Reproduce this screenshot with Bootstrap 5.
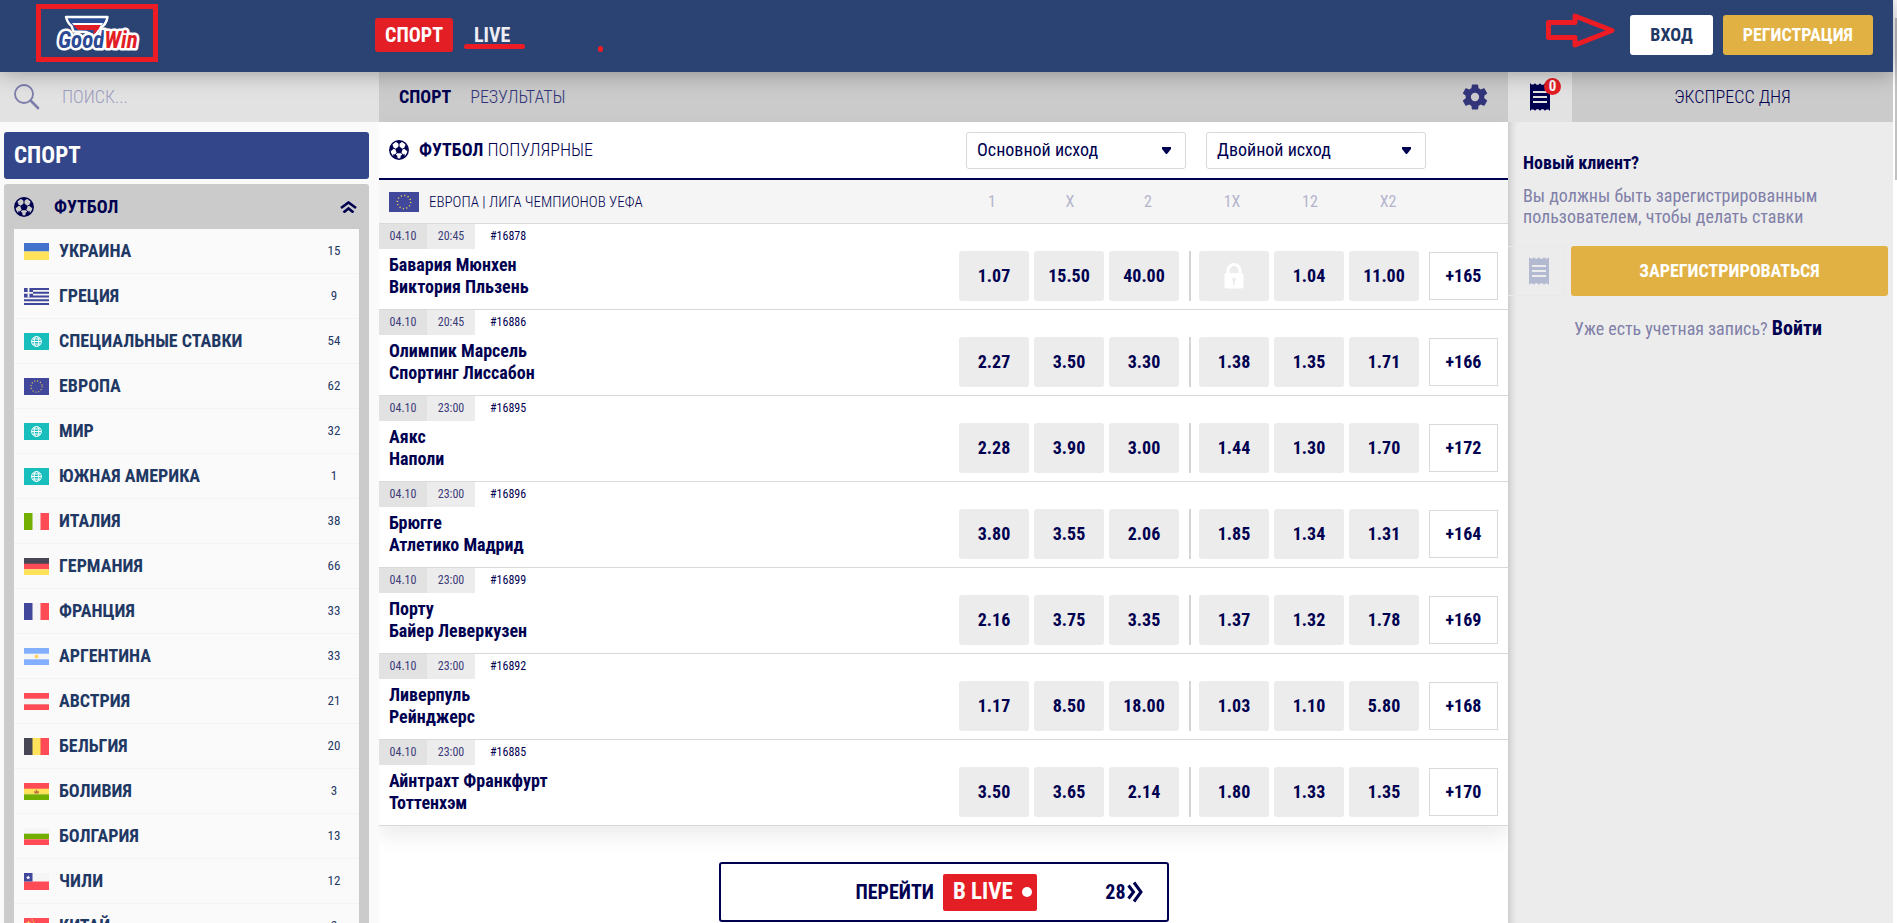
<!DOCTYPE html>
<html lang="ru">
<head>
<meta charset="utf-8">
<meta name="viewport" content="width=device-width, initial-scale=1">
<title>GoodWin</title>
<link href="https://cdn.jsdelivr.net/npm/bootstrap@5.3.0/dist/css/bootstrap.min.css" rel="stylesheet">
<style>
  :root { --ink: #000050; --navy: #1f3864; --head: #2b4373; --red: #e41e25; --pen: #ed1c24; --gold: #e1b243; --bar: #cbcbcb; --tile: #ececec; --line: #d9d9d9; }
  body { font-family: "Roboto Condensed", Roboto, sans-serif; font-size: 18px; line-height: 22px; color: var(--ink); background: #fff; }
  a { color: inherit; text-decoration: none; }
  .light-text { font-weight: 300; }
  .soft-ink { color: #33357b; }
  .page { padding-right: 4px; }
  .top-head { height: 72px; background: var(--head); box-shadow: 0 0 22px rgba(0,0,0,.35); z-index: 5; }
  .brand-area { width: 375px; padding-left: 36px; }
  .brand { border: 5px solid var(--pen); width: 122px; height: 58px; }
  .modes { gap: 11px; padding-bottom: 2px; }
  .mode { height: 34px; padding: 0 10px; font-size: 20px; font-weight: 700; color: #ededf2; border-radius: 3px; }
  .mode-on { background: var(--red); color: #fff; }
  .underline-mark { left: 0; right: -5px; bottom: 3px; height: 5px; border-radius: 3px; background: var(--pen); }
  .dot-mark { width: 5px; height: 6px; border-radius: 3px; background: var(--pen); margin-left: 67px; align-self: flex-end; }
  .head-actions { padding: 0 20px 2px 0; gap: 10px; }
  .head-btn { height: 40px; padding: 0 20px; border: 0; border-radius: 3px; font-size: 18px; font-weight: 700; line-height: 22px; }
  .btn-enter, .btn-enter:hover { background: #fff; color: var(--navy); }
  .btn-gold, .btn-gold:hover { background: var(--gold); color: #fff; }
  .scroll-thumb { right: 0; top: 18px; width: 2px; height: 162px; background: #c1c1c1; }

  .side { width: 379px; background: #fafafa; }
  .search { height: 50px; background: #e2e2e2; padding-left: 14px; gap: 22px; }
  .search input { font-weight: 300; font-size: 18px; color: var(--ink); }
  .search input::placeholder { color: #9c9cc0; opacity: 1; }
  .side-body { padding: 10px 10px 0 4px; gap: 5px; }
  .side-title { height: 47px; padding-left: 10px; background: #33468a; color: #fff; border-radius: 3px; font-size: 23px; font-weight: 700; }
  .sport-box { background: var(--bar); border-radius: 3px; padding: 0 10px; }
  .sport-head { height: 45px; font-weight: 700; padding-right: 2px; }
  .land { height: 45px; padding: 0 14px 0 10px; background: #fafafa; border-bottom: 1px solid #f3f3f5; color: var(--navy); font-weight: 700; }
  .land svg { width: 25px; height: 17px; margin-right: 10px; }
  .land .num { width: 22px; font-size: 13px; font-weight: 400; text-align: center; }

  .sub-bar { height: 50px; background: var(--bar); }
  .main-tabs { padding: 0 20px; gap: 19px; }
  .title-row { height: 58px; padding: 0 10px; border-bottom: 2px solid var(--ink); }
  .title-row > svg, .league > svg { margin-right: 10px; }
  .market { width: 220px; height: 37px; padding: 0 10px; border: 1px solid var(--line); border-radius: 3px; font-size: 18px; font-weight: 400; line-height: 22px; color: var(--ink); margin-right: 20px;
    background: #fff url("data:image/svg+xml,%3Csvg xmlns='http://www.w3.org/2000/svg' viewBox='0 0 9 7'%3E%3Cpath fill='%23000050' d='M0 0h9v2L5 7H4L0 2z'/%3E%3C/svg%3E") no-repeat right 14px center / 9px 7px; }
  .market:last-of-type { margin-right: 72px; }
  .league { height: 44px; padding: 0 10px; background: #f5f5f5; border-bottom: 1px solid var(--line); font-size: 15px; }
  .league .cap-col { width: 78px; text-align: center; color: #b4b4cd; font-size: 16px; font-weight: 400; }
  .league .cap-gap { width: 6px; }
  .league .cap-end { width: 71px; }
  .match { height: 86px; border-bottom: 1px solid var(--line); }
  .chip { width: 48px; height: 25px; font-size: 12px; line-height: 25px; text-align: center; color: #3c3c78; background: var(--tile); }
  .chip-day { background: #e2e2e2; }
  .code { font-size: 12px; line-height: 25px; padding-left: 15px; }
  .teams { padding: 5px 10px 0; font-weight: 700; }
  .odds { padding: 27px 10px 0 0; gap: 5px; }
  .odd { width: 70px; height: 50px; padding: 0; border: 0; border-radius: 3px; background: var(--tile); color: var(--ink); font-weight: 700; }
  .split { width: 2px; height: 50px; margin: 0 3px 0 5px; background: #d4d4d4; }
  .more { width: 69px; height: 48px; padding: 0; margin: 1px 0 0 5px; border: 1px solid var(--line); background: #fff; color: var(--ink); font-weight: 700; }
  .match-list { box-shadow: 0 10px 20px rgba(0,0,0,.08); }
  .to-live { width: 450px; height: 60px; margin-top: 36px; border: 2px solid var(--ink); border-radius: 3px; color: var(--ink); font-size: 20px; font-weight: 700; background: #fff; padding: 0 24px 0 135px; }
  .live-chip { height: 37px; background: var(--red); color: #fff; border-radius: 2px; padding: 0 5px 0 10px; font-size: 23px; gap: 9px; margin-left: 9px; }
  .live-dot { width: 10px; height: 10px; border-radius: 50%; background: #fff; }

  .slip { width: 385px; background: #ececec; }
  .slip-tab { width: 64px; background: #e2e2e2; }
  .slip-count { left: 36px; top: 6px; width: 17px; height: 17px; border-radius: 50%; background: var(--red); color: #fff; font-size: 15px; line-height: 17px; font-weight: 700; text-align: center; }
  .slip-body { padding: 30px 5px 0 0; box-shadow: inset 10px 0 9px -8px rgba(0,0,0,.18); }
  .muted-ink { color: #8080a8; }
  .slip-text { padding-left: 15px; line-height: 21px; }
  .slip-action { margin-top: 19px; gap: 6px; }
  .ghost-slip { width: 57px; height: 50px; padding-left: 6px; border: 1px solid #e8e8ea; border-left: 0; color: #b2b9d0; }
  .wide-btn { height: 50px; border: 0; border-radius: 3px; font-weight: 700; }
  .login-line { padding-top: 21px; }
  .login-line a { color: var(--ink); font-size: 20px; font-weight: 700; }
</style>
</head>
<body>
<svg width="0" height="0" class="d-none" aria-hidden="true">
  <symbol id="ball" viewBox="0 0 20 20"><circle cx="10" cy="10" r="9.200" fill="none" stroke="#000050" stroke-width="1.500"/><path fill="#000050" d="M10 6.200l3.700 2.700-1.400 4.300H7.700L6.300 8.900zM6.300 1.500Q10 0 13.700 1.500L10 4zM.8 7L3.800 5l1 3.800L1.400 11.500zM19.200 7L16.200 5l-1 3.800 3.400 2.700zM4 17.500l.4-3.600 3.800 1.500L8.800 19zM16 17.500l-.4-3.600-3.800 1.500-.6 3.600z"/><path stroke="#000050" stroke-width="1" d="M10 3v4M6.500 9L4 8M13.500 9l2.500-1M7.700 13l-1.700 2M12.300 13l1.700 2"/></symbol>
  <symbol id="ticket" viewBox="0 0 20 28"><path fill="currentColor" fill-rule="evenodd" d="M0 0l1.500 1.500h2L5 .2l1.500 1.500h2L10 .2l1.500 1.500h2L15 .2l1.500 1.300h2L20 0v28l-1.500-1.500-2 0L15 27.800l-1.500-1.500h-2L10 27.800l-1.500-1.500h-2L5 27.800l-1.500-1.300h-2L0 28zM3 8v2h14V8zM3 13v2h14v-2zM3 18v2h14v-2z"/></symbol>
  <symbol id="eu" viewBox="0 0 25 17" preserveAspectRatio="none"><path fill="#41479b" d="M0 0h25v17H0z"/><circle cx="12.500" cy="8.500" r="5.600" fill="none" stroke="#e8cf58" stroke-width="1.200" stroke-dasharray="1 1.930"/></symbol>
  <symbol id="world" viewBox="0 0 25 17"><path fill="#17bebb" d="M0 0h25v17H0z"/><g fill="none" stroke="#fff" stroke-width="1"><circle cx="12.500" cy="8.500" r="4.900"/><ellipse cx="12.500" cy="8.500" rx="2.300" ry="4.900"/><path d="M7.500 8.500h10M8.500 6h8M8.500 11h8"/></g></symbol>
</svg>

<div class="page vh-100 d-flex flex-column overflow-hidden position-relative">
  <header class="top-head d-flex align-items-center position-relative flex-shrink-0">
    <div class="brand-area flex-shrink-0 align-self-start pt-1">
      <a href="#" class="brand d-flex align-items-center justify-content-center" aria-label="GoodWin">
        <svg width="100" height="40" viewBox="0 0 100 40">
          <path d="M19 4h41.500q-1 8-8 11l-4 8-9-4-13-.5-2-5.500q-4-3-5.500-9z" fill="#2c4a94" stroke="#fff" stroke-width="2.400" stroke-linejoin="round"/>
          <path d="M25 10h31l-1.500 2.500H27z" fill="#fff"/>
          <path d="M26.500 12h27q-1 4-4.500 7l-3 4 1-6H31.500q-3-2-5-5z" fill="#e41e25"/>
          <g font-family="Roboto Condensed, sans-serif" font-size="23" font-style="italic" font-weight="700" stroke="#fff" stroke-width="5" stroke-linejoin="round" paint-order="stroke">
            <text x="11" y="35" fill="#2c4a94">Good<tspan fill="#e41e25">Win</tspan></text>
          </g>
        </svg>
      </a>
    </div>
    <nav class="modes d-flex align-items-center">
      <a href="#" class="mode mode-on d-flex align-items-center">СПОРТ</a>
      <a href="#" class="mode d-flex align-items-center position-relative">LIVE<span class="underline-mark position-absolute"></span></a>
      <span class="dot-mark"></span>
    </nav>
    <div class="head-actions ms-auto d-flex align-items-center">
      <svg width="84" height="48" viewBox="0 0 84 48" fill="none" stroke="#ed1c24" stroke-width="5" stroke-linejoin="round"><path d="M12.500 11.500H39V5l37 14.500L39 34v-7.500H12.500z"/></svg>
      <button type="button" class="btn head-btn btn-enter">ВХОД</button>
      <button type="button" class="btn head-btn btn-gold">РЕГИСТРАЦИЯ</button>
    </div>
  </header>

  <div class="d-flex flex-grow-1 overflow-hidden">
    <aside class="side flex-shrink-0 d-flex flex-column overflow-hidden">
      <label class="search d-flex align-items-center flex-shrink-0">
        <svg width="26" height="26" viewBox="0 0 26 26" fill="none" stroke="#7d7dab" stroke-linecap="round"><circle cx="10" cy="10" r="9" stroke-width="1.800"/><path d="M16.500 16.500L24 24" stroke-width="2.600"/></svg>
        <input type="text" class="border-0 bg-transparent p-0 flex-grow-1 shadow-none" placeholder="ПОИСК..." aria-label="Поиск">
      </label>
      <div class="side-body d-flex flex-column">
        <div class="side-title d-flex align-items-center">СПОРТ</div>
        <div class="sport-box">
          <a href="#" class="sport-head d-flex align-items-center">
            <svg width="20" height="20"><use href="#ball"/></svg><span class="flex-grow-1 ps-3 ms-1">ФУТБОЛ</span>
            <svg width="17" height="12" viewBox="0 0 17 12" fill="none" stroke="#000050" stroke-width="2.600"><path d="M1 7l7.500-5.500L16 7M3.500 11.500l5-4 5 4"/></svg>
          </a>
          <a href="#" class="land d-flex align-items-center"><svg viewBox="0 0 25 17"><path fill="#4173cd" d="M0 0h25v8.500H0z"/><path fill="#ffe15a" d="M0 8.500h25V17H0z"/></svg><span class="flex-grow-1">УКРАИНА</span><span class="num">15</span></a>
          <a href="#" class="land d-flex align-items-center"><svg viewBox="0 0 25 17"><path fill="#f5f5f5" d="M0 0h25v17H0z"/><path fill="#41479b" d="M0 0h25v2H0zM0 3.800h25v1.900H0zM0 7.600h25v1.900H0zM0 11.300h25v1.900H0zM0 15h25v2H0zM0 0h9v9.500H0z"/><path fill="#f5f5f5" d="M3.600 0h1.800v9.500H3.600zM0 3.900h9v1.800H0z"/></svg><span class="flex-grow-1">ГРЕЦИЯ</span><span class="num">9</span></a>
          <a href="#" class="land d-flex align-items-center"><svg><use href="#world"/></svg><span class="flex-grow-1">СПЕЦИАЛЬНЫЕ СТАВКИ</span><span class="num">54</span></a>
          <a href="#" class="land d-flex align-items-center"><svg><use href="#eu"/></svg><span class="flex-grow-1">ЕВРОПА</span><span class="num">62</span></a>
          <a href="#" class="land d-flex align-items-center"><svg><use href="#world"/></svg><span class="flex-grow-1">МИР</span><span class="num">32</span></a>
          <a href="#" class="land d-flex align-items-center"><svg><use href="#world"/></svg><span class="flex-grow-1">ЮЖНАЯ АМЕРИКА</span><span class="num">1</span></a>
          <a href="#" class="land d-flex align-items-center"><svg viewBox="0 0 25 17"><path fill="#f5f5f5" d="M0 0h25v17H0z"/><path fill="#73af00" d="M0 0h8.500v17H0z"/><path fill="#ff4b55" d="M16.500 0H25v17h-8.500z"/></svg><span class="flex-grow-1">ИТАЛИЯ</span><span class="num">38</span></a>
          <a href="#" class="land d-flex align-items-center"><svg viewBox="0 0 25 17"><path fill="#464655" d="M0 0h25v6H0z"/><path fill="#ff4b55" d="M0 5.700h25v5.600H0z"/><path fill="#ffe15a" d="M0 11.300h25V17H0z"/></svg><span class="flex-grow-1">ГЕРМАНИЯ</span><span class="num">66</span></a>
          <a href="#" class="land d-flex align-items-center"><svg viewBox="0 0 25 17"><path fill="#f5f5f5" d="M0 0h25v17H0z"/><path fill="#41479b" d="M0 0h8.500v17H0z"/><path fill="#ff4b55" d="M16.500 0H25v17h-8.500z"/></svg><span class="flex-grow-1">ФРАНЦИЯ</span><span class="num">33</span></a>
          <a href="#" class="land d-flex align-items-center"><svg viewBox="0 0 25 17"><path fill="#82afff" d="M0 0h25v17H0z"/><path fill="#f5f5f5" d="M0 5.700h25v5.600H0z"/><circle cx="12.500" cy="8.500" r="1.900" fill="#ffd166"/></svg><span class="flex-grow-1">АРГЕНТИНА</span><span class="num">33</span></a>
          <a href="#" class="land d-flex align-items-center"><svg viewBox="0 0 25 17"><path fill="#ff4b55" d="M0 0h25v17H0z"/><path fill="#f5f5f5" d="M0 5.700h25v5.600H0z"/></svg><span class="flex-grow-1">АВСТРИЯ</span><span class="num">21</span></a>
          <a href="#" class="land d-flex align-items-center"><svg viewBox="0 0 25 17"><path fill="#ffe15a" d="M0 0h25v17H0z"/><path fill="#464655" d="M0 0h8.500v17H0z"/><path fill="#ff4b55" d="M16.500 0H25v17h-8.500z"/></svg><span class="flex-grow-1">БЕЛЬГИЯ</span><span class="num">20</span></a>
          <a href="#" class="land d-flex align-items-center"><svg viewBox="0 0 25 17"><path fill="#ff4b55" d="M0 0h25v6H0z"/><path fill="#ffe15a" d="M0 5.700h25v5.600H0z"/><path fill="#73af00" d="M0 11.300h25V17H0z"/><path fill="#c0703c" d="M10.500 10.500L10 8l1.500.5 1-2.500 1 2.500L15 8l-.5 2.500z"/></svg><span class="flex-grow-1">БОЛИВИЯ</span><span class="num">3</span></a>
          <a href="#" class="land d-flex align-items-center"><svg viewBox="0 0 25 17"><path fill="#f5f5f5" d="M0 0h25v6H0z"/><path fill="#73af00" d="M0 5.700h25v5.600H0z"/><path fill="#ff4b55" d="M0 11.300h25V17H0z"/></svg><span class="flex-grow-1">БОЛГАРИЯ</span><span class="num">13</span></a>
          <a href="#" class="land d-flex align-items-center"><svg viewBox="0 0 25 17"><path fill="#f5f5f5" d="M0 0h25v9H0z"/><path fill="#ff4b55" d="M0 8.500h25V17H0z"/><path fill="#41479b" d="M0 0h8.500v8.500H0z"/><path fill="#fff" d="M4.200 2.300l.6 1.500 1.600.1-1.200 1 .4 1.600-1.400-.9-1.400.9.400-1.600-1.200-1 1.600-.1z"/></svg><span class="flex-grow-1">ЧИЛИ</span><span class="num">12</span></a>
          <a href="#" class="land d-flex align-items-center"><svg viewBox="0 0 25 17"><path fill="#ff4b55" d="M0 0h25v17H0z"/><path fill="#ffe15a" d="M4.500 2.500l.8 2 2.100.1-1.600 1.300.5 2.100-1.800-1.100L2.700 8l.5-2.100-1.600-1.300 2.100-.1zM7.500 1.500h1.400v1H7.500zM9 3.500h1.300v1H9zM9 6h1.300v1H9z"/></svg><span class="flex-grow-1">КИТАЙ</span><span class="num">2</span></a>
        </div>
      </div>
    </aside>

    <main class="flex-grow-1 overflow-hidden">
      <div class="sub-bar main-tabs d-flex align-items-center">
        <a href="#" class="fw-bold">СПОРТ</a>
        <a href="#" class="light-text soft-ink">РЕЗУЛЬТАТЫ</a>
        <button type="button" class="btn border-0 p-0 ms-auto d-flex" aria-label="Настройки">
          <svg width="26" height="26" viewBox="2 2 20 20" fill="#33357b"><path d="M19.140 12.940c.04-.3.060-.61.060-.94 0-.32-.02-.64-.07-.94l2.030-1.580a.49.490 0 0 0 .12-.61l-1.920-3.320a.488.488 0 0 0-.59-.22l-2.390.96c-.5-.38-1.030-.7-1.620-.94l-.36-2.540a.484.484 0 0 0-.48-.41h-3.840c-.24 0-.43.170-.47.410l-.36 2.540c-.59.240-1.130.570-1.620.94l-2.390-.96c-.22-.08-.47 0-.59.220L2.740 8.870c-.12.210-.08.470.120.610l2.030 1.580c-.05.300-.09.630-.09.940s.02.640.070.940l-2.030 1.580a.49.490 0 0 0-.12.610l1.920 3.320c.12.220.37.290.59.220l2.390-.96c.5.380 1.030.700 1.620.940l.36 2.540c.05.240.24.410.48.410h3.840c.24 0 .44-.17.470-.41l.36-2.540c.59-.24 1.130-.56 1.620-.94l2.390.96c.22.080.47 0 .59-.22l1.920-3.320c.12-.22.070-.47-.12-.61zM12 15.200a3.200 3.200 0 1 1 0-6.400 3.200 3.200 0 0 1 0 6.400z"/></svg>
        </button>
      </div>
      <section class="match-list">
        <div class="title-row d-flex align-items-center">
          <svg width="20" height="20"><use href="#ball"/></svg>
          <div class="flex-grow-1"><b>ФУТБОЛ</b> <span class="light-text">ПОПУЛЯРНЫЕ</span></div>
          <select class="market form-select flex-shrink-0" aria-label="Рынок 1"><option>Основной исход</option></select>
          <select class="market form-select flex-shrink-0" aria-label="Рынок 2"><option>Двойной исход</option></select>
        </div>
        <div class="league d-flex align-items-center light-text">
          <svg width="30" height="20"><use href="#eu"/></svg>
          <span class="flex-grow-1">ЕВРОПА | ЛИГА ЧЕМПИОНОВ УЕФА</span>
          <span class="cap-col">1</span><span class="cap-col">X</span><span class="cap-col">2</span><span class="cap-gap"></span><span class="cap-col">1X</span><span class="cap-col">12</span><span class="cap-col">X2</span><span class="cap-end"></span>
        </div>

        <div class="match d-flex">
          <div class="flex-grow-1"><div class="d-flex"><span class="chip chip-day">04.10</span><span class="chip">20:45</span><span class="code">#16878</span></div><div class="teams">Бавария Мюнхен<br>Виктория Пльзень</div></div>
          <div class="odds d-flex"><button class="odd">1.07</button><button class="odd">15.50</button><button class="odd">40.00</button><span class="split"></span><button class="odd" disabled aria-label="Закрыто"><svg width="20" height="26" viewBox="0 0 20 26"><path d="M4 11V7.500a6 6 0 0 1 12 0V11" fill="none" stroke="#fff" stroke-width="3"/><path fill="#fff" fill-rule="evenodd" d="M2.500 10h15q2 0 2 2v11.500q0 2-2 2h-15q-2 0-2-2V12q0-2 2-2zM10 14.500a1.900 1.900 0 0 0-1 3.500v3.500h2V18a1.900 1.900 0 0 0-1-3.500z"/></svg></button><button class="odd">1.04</button><button class="odd">11.00</button><button class="more">+165</button></div>
        </div>
        <div class="match d-flex">
          <div class="flex-grow-1"><div class="d-flex"><span class="chip chip-day">04.10</span><span class="chip">20:45</span><span class="code">#16886</span></div><div class="teams">Олимпик Марсель<br>Спортинг Лиссабон</div></div>
          <div class="odds d-flex"><button class="odd">2.27</button><button class="odd">3.50</button><button class="odd">3.30</button><span class="split"></span><button class="odd">1.38</button><button class="odd">1.35</button><button class="odd">1.71</button><button class="more">+166</button></div>
        </div>
        <div class="match d-flex">
          <div class="flex-grow-1"><div class="d-flex"><span class="chip chip-day">04.10</span><span class="chip">23:00</span><span class="code">#16895</span></div><div class="teams">Аякс<br>Наполи</div></div>
          <div class="odds d-flex"><button class="odd">2.28</button><button class="odd">3.90</button><button class="odd">3.00</button><span class="split"></span><button class="odd">1.44</button><button class="odd">1.30</button><button class="odd">1.70</button><button class="more">+172</button></div>
        </div>
        <div class="match d-flex">
          <div class="flex-grow-1"><div class="d-flex"><span class="chip chip-day">04.10</span><span class="chip">23:00</span><span class="code">#16896</span></div><div class="teams">Брюгге<br>Атлетико Мадрид</div></div>
          <div class="odds d-flex"><button class="odd">3.80</button><button class="odd">3.55</button><button class="odd">2.06</button><span class="split"></span><button class="odd">1.85</button><button class="odd">1.34</button><button class="odd">1.31</button><button class="more">+164</button></div>
        </div>
        <div class="match d-flex">
          <div class="flex-grow-1"><div class="d-flex"><span class="chip chip-day">04.10</span><span class="chip">23:00</span><span class="code">#16899</span></div><div class="teams">Порту<br>Байер Леверкузен</div></div>
          <div class="odds d-flex"><button class="odd">2.16</button><button class="odd">3.75</button><button class="odd">3.35</button><span class="split"></span><button class="odd">1.37</button><button class="odd">1.32</button><button class="odd">1.78</button><button class="more">+169</button></div>
        </div>
        <div class="match d-flex">
          <div class="flex-grow-1"><div class="d-flex"><span class="chip chip-day">04.10</span><span class="chip">23:00</span><span class="code">#16892</span></div><div class="teams">Ливерпуль<br>Рейнджерс</div></div>
          <div class="odds d-flex"><button class="odd">1.17</button><button class="odd">8.50</button><button class="odd">18.00</button><span class="split"></span><button class="odd">1.03</button><button class="odd">1.10</button><button class="odd">5.80</button><button class="more">+168</button></div>
        </div>
        <div class="match d-flex">
          <div class="flex-grow-1"><div class="d-flex"><span class="chip chip-day">04.10</span><span class="chip">23:00</span><span class="code">#16885</span></div><div class="teams">Айнтрахт Франкфурт<br>Тоттенхэм</div></div>
          <div class="odds d-flex"><button class="odd">3.50</button><button class="odd">3.65</button><button class="odd">2.14</button><span class="split"></span><button class="odd">1.80</button><button class="odd">1.33</button><button class="odd">1.35</button><button class="more">+170</button></div>
        </div>
      </section>
      <a href="#" class="to-live d-flex align-items-center mx-auto">ПЕРЕЙТИ<span class="live-chip d-flex align-items-center">В LIVE<span class="live-dot"></span></span><span class="ms-auto">28</span>
        <svg width="17" height="22" viewBox="0 0 17 22" fill="none" stroke="#000050" stroke-width="3"><path d="M2.500 4.500l5 6.500-5 6.500M8 1.500l7 9.500-7 9.500"/></svg></a>
    </main>

    <aside class="slip flex-shrink-0 d-flex flex-column">
      <div class="sub-bar d-flex flex-shrink-0">
        <a href="#" class="slip-tab position-relative d-flex align-items-center justify-content-center" aria-label="Купон"><svg width="20" height="28"><use href="#ticket"/></svg><span class="slip-count position-absolute">0</span></a>
        <a href="#" class="flex-grow-1 d-flex align-items-center justify-content-center light-text">ЭКСПРЕСС ДНЯ</a>
      </div>
      <div class="slip-body flex-grow-1">
        <div class="slip-text fw-bold">Новый клиент?</div>
        <p class="slip-text muted-ink mb-0 mt-2 pt-1">Вы должны быть зарегистрированным<br>пользователем, чтобы делать ставки</p>
        <div class="slip-action d-flex">
          <span class="ghost-slip d-flex align-items-center justify-content-center"><svg width="20" height="28"><use href="#ticket"/></svg></span>
          <button type="button" class="wide-btn btn-gold flex-grow-1">ЗАРЕГИСТРИРОВАТЬСЯ</button>
        </div>
        <p class="login-line text-center mb-0 muted-ink">Уже есть учетная запись? <a href="#">Войти</a></p>
      </div>
    </aside>
  </div>
  <span class="scroll-thumb position-absolute"></span>
</div>
<script src="https://cdn.jsdelivr.net/npm/bootstrap@5.3.0/dist/js/bootstrap.bundle.min.js"></script>
</body>
</html>
